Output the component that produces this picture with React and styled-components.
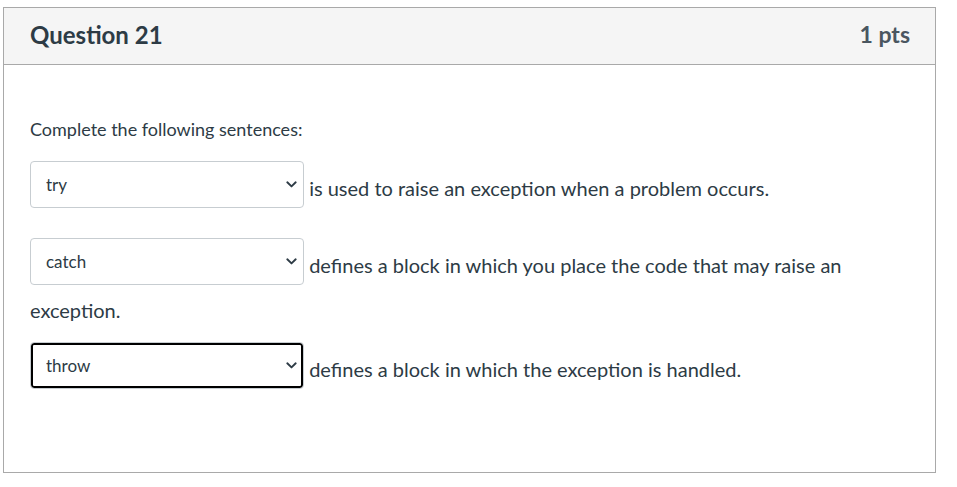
import React from "react";
import styled, { createGlobalStyle } from "styled-components";

const GlobalStyle = createGlobalStyle`
  body {
    margin: 0;
    background: #fff;
    font-family: Lato, "Liberation Sans", sans-serif;
    color: #2d3b45;
  }
`;

const sentences = [
  { answer: "try", text: "is used to raise an exception when a problem occurs." },
  {
    answer: "catch",
    text: "defines a block in which you place the code that may raise an exception.",
  },
  { answer: "throw", text: "defines a block in which the exception is handled.", focused: true },
];

const Chevron = () => (
  <ChevronIcon width="11" height="7" viewBox="0 0 11 7" fill="none">
    <path d="M1.3 1.3 L5.5 5.4 L9.7 1.3" stroke="#2d3b45" strokeWidth="1.9" strokeLinecap="round" strokeLinejoin="round" />
  </ChevronIcon>
);

const Dropdown = ({ value, focused }) => (
  <SelectWrap>
    <Select defaultValue={value} $focused={focused}>
      <option value="">[ Choose ]</option>
      <option value="try">try</option>
      <option value="catch">catch</option>
      <option value="throw">throw</option>
    </Select>
    <Chevron />
  </SelectWrap>
);

const App = () => {
  return (
    <>
      <GlobalStyle />
      <Card>
        <Header>
          <Title>Question 21</Title>
          <Points>1 pts</Points>
        </Header>
        <Body>
          <Intro>Complete the following sentences:</Intro>
          {sentences.map((s) => (
            <Sentence key={s.answer}>
              <Dropdown value={s.answer} focused={s.focused} /> {s.text}
            </Sentence>
          ))}
        </Body>
      </Card>
    </>
  );
};

const Card = styled.div`
  box-sizing: border-box;
  margin: 7px 0 0 3px;
  width: 933px;
  height: 466px;
  border: 1px solid #a9a9a9;
  background: #fff;
`;

const Header = styled.div`
  display: flex;
  align-items: center;
  justify-content: space-between;
  box-sizing: border-box;
  height: 57px;
  padding: 0 25px 3px 26px;
  background: #f5f5f5;
  border-bottom: 1px solid #a9a9a9;
`;

const Title = styled.h2`
  margin: 0;
  font-size: 24px;
  font-weight: 700;
  color: #2d3b45;
  line-height: 1;
`;

const Points = styled.div`
  font-size: 23px;
  font-weight: 700;
  color: #4a5660;
  line-height: 1;
`;

const Body = styled.div`
  padding: 51px 26px 0 26px;
`;

const Intro = styled.p`
  margin: 0 0 18px;
  font-size: 18px;
  line-height: 27px;
  color: #2d3b45;
`;

const Sentence = styled.p`
  margin: 0 0 18px;
  font-size: 20px;
  line-height: 27px;
  color: #2d3b45;
`;

const SelectWrap = styled.span`
  position: relative;
  display: inline-block;
  vertical-align: middle;
  margin-bottom: 12px;
`;

const Select = styled.select`
  display: block;
  box-sizing: border-box;
  width: 274px;
  height: 47px;
  padding: 0 28px 0 15px;
  appearance: none;
  -webkit-appearance: none;
  background: #fff;
  border: 1px solid #c7cdd1;
  border-radius: 4px;
  box-shadow: ${(p) => (p.$focused ? "inset 0 0 0 2px #000" : "none")};
  font-family: Lato, "Liberation Sans", sans-serif;
  font-size: 17px;
  color: #2d3b45;
  outline: none;
`;

const ChevronIcon = styled.svg`
  position: absolute;
  right: 7px;
  top: 50%;
  margin-top: -4px;
  pointer-events: none;
`;

export default App;
